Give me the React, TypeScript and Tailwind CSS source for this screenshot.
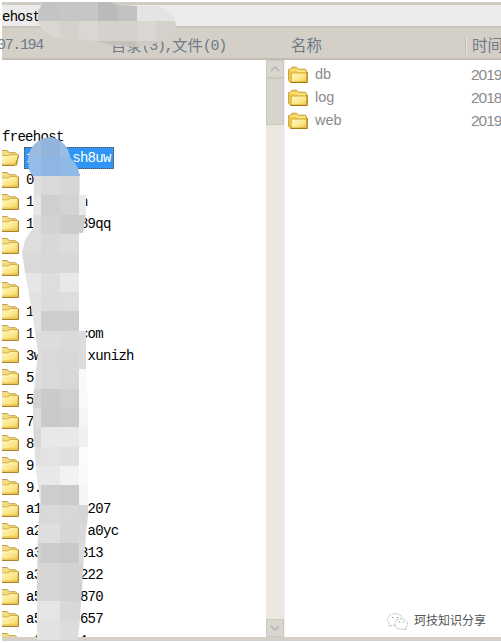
import React from "react";

const mono = "font-['Liberation_Mono','Noto_Sans_CJK_SC',monospace]";
const sans = "font-['Liberation_Sans','Noto_Sans_CJK_SC',sans-serif]";

const rows = [
  "1     sh8uw", "0", "1      n", "1      89qq", "", "", ".", "1", "1     .com",
  "3w     .xunizh", "5", "5", "7", "8", "9", "9.", "a1      207", "a2      a0yc",
  "a3     313", "a3     222", "a5     870", "a5     657", "a6     1",
];

function FaceGradient() {
  return (
    <defs>
      <linearGradient id="face" x1="0" y1="0" x2="1" y2="1">
        <stop offset="0" stopColor="#fffac4" />
        <stop offset="0.6" stopColor="#fce68a" />
        <stop offset="1" stopColor="#ecc545" />
      </linearGradient>
    </defs>
  );
}

function Folder() {
  return (
    <svg width="20" height="18" viewBox="0 0 20 18" className="shrink-0">
      <FaceGradient />
      <path d="M.6 14.5V3.5L3 3L4 1.2H8.5L10.5 3.2H17.5L18.5 5V16.3H3Z" fill="#f0cc4e" stroke="#c9a037" />
      <path d="M2 4H8L10 5.2H17.5" fill="none" stroke="#fff0a0" strokeWidth="1.2" />
      <path d="M3.4 7H18.6V16H3Z" fill="url(#face)" stroke="#d9ac35" />
      <path d="M2.5 16.5H19.3V6" fill="none" stroke="#a87810" />
    </svg>
  );
}

function TreeFolder({ open }: { open: boolean }) {
  return (
    <svg width="17" height="18" viewBox="0 0 17 18" className="shrink-0">
      <FaceGradient />
      <path d="M-1 1.5H5L7.5 3.7H13.5L15 5.5V16H-1Z" fill="#f3dc83" stroke="#c3a04c" />
      <path d={open ? "M-1 6.5H6L8 5.8H17L14 14.5L12.5 16H-1Z" : "M-1 6.8H6L8 5.5H16.3V16H-1Z"} fill="url(#face)" stroke="#d6b04c" />
      <path d={open ? "M-1 16.5H12.5L14.5 14L16.8 6" : "M-1 16.5H16.4V6"} fill="none" stroke="#a98432" />
      <path d="M0 15H14" stroke="#edc54f" />
    </svg>
  );
}

const cells: string[][] = [
  ["#9bbbe0", "#91b4da", "#99bde4", "#99bde4"],
  ["#94bce9", "#8db6e4", "#8fb9e6", "#8fb9e6"],
  ["#dfdfdf", "#d9d9d9", "#d6d6d6", "#e8e8e8"],
  ["#e6e6e6", "#cfcfcf", "#d3d3d3", "#e9e9e9"],
  ["#dddddd", "#d2d2d2", "#cccccc", "#cccccc"],
  ["#dddddd", "#d8d8d8", "#dcdcdc", "#ffffff"],
  ["#d9d9d9", "#d7d7d7", "#d8d8d8", "#ffffff"],
  ["#e6e6e6", "#dddddd", "#e8e8e8", "#ffffff"],
  ["#e1e1e1", "#dcdcdc", "#dddddd", "#ffffff"],
  ["#e3e3e3", "#cecece", "#cecece", "#ffffff"],
  ["#dddddd", "#dcdcdc", "#dadada", "#dddddd"],
  ["#dddddd", "#d9d9d9", "#d8d8d8", "#dcdcdc"],
  ["#dedede", "#dadada", "#d7d7d7", "#fafafa"],
  ["#d3d3d3", "#cacaca", "#cfcfcf", "#fafafa"],
  ["#dddddd", "#c9c9c9", "#cbcbcb", "#f5f5f5"],
  ["#d8d8d8", "#e8e8e8", "#e8e8e8", "#f0f0f0"],
  ["#e0e0e0", "#e3e3e3", "#e0e0e0", "#fbfbfb"],
  ["#e8e8e8", "#e8e8e8", "#f2f2f2", "#fafafa"],
  ["#e5e5e5", "#cdcdcd", "#cbcbcb", "#f5f5f5"],
  ["#d8d8d8", "#d9d9d9", "#d7d7d7", "#d5d5d5"],
  ["#dedede", "#dedede", "#d6d6d6", "#d9d9d9"],
  ["#d2d2d2", "#cccccc", "#c9c9c9", "#dddddd"],
  ["#d8d8d8", "#d6d6d6", "#d2d2d2", "#d4d4d4"],
  ["#d6d6d6", "#d5d5d5", "#d2d2d2", "#d0d0d0"],
  ["#e5e5e5", "#e5e5e5", "#d8d8d8", "#d5d5d5"],
  ["#e2e2e2", "#e2e2e2", "#dcdcdc", "#d8d8d8"],
];

function Redactions() {
  return (
    <svg className="pointer-events-none absolute left-0 top-0" width="501" height="643">
      <defs>
        <clipPath id="column">
          <path d="M28 158C30 146 38 138 50 137C61 138 69 147 70 157L77 166L80 176V195H86V214L83 233H79V330H86V369L88 407V515L86 535L83 570L82 590L78 640H37V580L38 530L40 500L36 470L33 425V400L35 380L38 352L34 325L30 300L25 272L22 252L25 240L33 228L34 178L29 170Z" />
        </clipPath>
        <clipPath id="address">
          <path d="M43 2H109L117 5L137 6H155C165 8 174 15 176 24V30L168 38L163 41L150 45L138 47L112 45L96 41L58 38C47 35 40 28 38 22V12Z" />
        </clipPath>
      </defs>
      <g clipPath="url(#column)">
        {cells.map((row, y) => row.map((fill, x) => (
          <rect key={`${x}-${y}`} x={22 + x * 19.1} y={137.3 + y * 19.33} width="19.6" height="19.8" fill={fill} shapeRendering="crispEdges" />
        )))}
      </g>
      <g clipPath="url(#address)">
        <path d="M37 2H180V48H37Z" fill="#d5d2cd" />
        <path d="M37 2H98V21H37Z" fill="#c4c4c4" />
        <path d="M60 2H98V21H60Z" fill="#c6c6c6" />
        <path d="M98 2H117V21H98Z" fill="#bababa" />
        <path d="M117 2H137V21H117Z" fill="#c1c1c1" />
        <path d="M137 2H180V21H137Z" fill="#e4e4e4" />
        <path d="M37 21H60V41H37ZM79 21H98V41H79ZM137 21H156V41H137Z" fill="#dad7d2" />
        <path d="M90 41H137V48H90Z" fill="#c4c1bb" />
        <path d="M137 41H170V48H137Z" fill="#cdcac4" />
      </g>
    </svg>
  );
}

function Chevron({ down = false }: { down?: boolean }) {
  return (
    <div className="flex h-[18px] shrink-0 items-center justify-center border border-[#cbc8c0] bg-[#d9d6cf]">
      <svg width="10" height="6" viewBox="0 0 10 6">
        <path d={down ? "M1 1L5 5L9 1" : "M1 5L5 1L9 5"} fill="none" stroke="#b0b3b8" strokeWidth="1.5" />
      </svg>
    </div>
  );
}

export default function App() {
  return (
    <div className={`relative flex h-[643px] w-[501px] flex-col overflow-hidden bg-white pl-[2px] pt-[2px] ${mono}`}>
      <div className="h-[26px] shrink-0 whitespace-pre border-b-2 border-t-[3px] border-b-[#c8c4bc] border-t-[#d0ccc5] bg-[#ebebeb] pt-px text-[14px] leading-[22px] tracking-[-0.75px] text-black">
        ehost
      </div>
      <div className="flex h-[32px] shrink-0 items-center whitespace-pre border-b-2 border-[#c1beb6] bg-[#d4d0c8] text-[15px] leading-[20px] text-[#6f7b86]">
        <div className="ml-[-5px] mt-[5px] w-[114px] shrink-0 tracking-[-1.35px]">07.194</div>
        <div className="mt-[7px] flex w-[180px] shrink-0 items-center">
          <span className="text-[15.3px]">目录</span>
          <span className="tracking-[-1.35px]">(3),</span>
          <span className="text-[15.3px]">文件</span>
          <span className="tracking-[-1.35px]">(0)</span>
        </div>
        <div className="mt-[7px] w-[174px] shrink-0 text-[15.5px]">名称</div>
        <div className="mt-[3px] h-[18px] w-[2px] shrink-0 border-l border-r border-l-[#c1beb6] border-r-[#e7e4df]" />
        <div className="ml-[5px] mt-[7px] shrink-0 text-[15.5px]">时间</div>
      </div>
      <div className="flex h-[577px] shrink-0">
        <div className="h-full w-[264px] shrink-0 overflow-hidden pt-[66px] text-[14px] tracking-[-0.7px] text-black">
          <div className="h-[21px] leading-[23px]">freehost</div>
          {rows.map((row, i) => (
            <div key={i} className="flex h-[21.95px] items-center whitespace-pre">
              <div className="mr-[5px]"><TreeFolder open={i === 0} /></div>
              {i === 0 ? (
                <div className="h-[22px] w-[90px] border border-dotted border-[#6b4a2c] bg-[#3095f5] pl-px leading-[21px] text-white">{row}</div>
              ) : (
                <div className="pl-[2px] pt-px leading-[22px]">{row}</div>
              )}
            </div>
          ))}
        </div>
        <div className="flex w-[19px] shrink-0 flex-col border-r border-[#f4f2ef] bg-[#ece8e1]">
          <Chevron />
          <div className="h-[47px] border border-[#cbc8c0] bg-[#d7d4cd]" />
          <div className="grow" />
          <Chevron down />
        </div>
        <div className={`grow overflow-hidden pt-[3px] text-[14.5px] text-[#8b8b8b] ${sans}`}>
          {[["db", "2019"], ["log", "2018"], ["web", "2019"]].map(([name, date]) => (
            <div key={name} className="flex h-[23px] items-center pl-[3px]">
              <Folder />
              <span className="ml-[7px] w-[156px] shrink-0">{name}</span>
              <span className="shrink-0 text-[15.5px] tracking-[-1px]">{date}</span>
            </div>
          ))}
        </div>
      </div>
      <div className="h-[4px] shrink-0 bg-[#d4d0c8]" />
      <Redactions />
      <div className={`absolute left-[387px] top-[611px] flex items-center gap-[6px] text-[12px] leading-[20px] text-[#555] ${sans}`}>
        <svg width="21" height="19" viewBox="0 0 21 19" fill="none" stroke="#a0a0a0" strokeWidth=".7" strokeDasharray="2 1">
          <path d="M8 13.5C6.8 13.5 6 13.3 5 13L2 14.5L2.6 12C-2 7.5 2 1.5 8 1.5C12 1.5 15 4 15.3 6.5" />
          <path d="M18.4 15.8L19 18L16.5 16.8C11 18.5 7.5 15 8 11.5C9.5 4.5 20.5 5.5 20.5 12C20.5 13.5 19.5 15 18.4 15.8Z" />
          <path d="M5 5.5H6.2M10 5.5H11.2M12 10H13.2M16 10H17.2" stroke="#555" />
        </svg>
        <span className="whitespace-nowrap [text-shadow:-0.5px_-0.5px_0_white]">珂技知识分享</span>
      </div>
    </div>
  );
}
